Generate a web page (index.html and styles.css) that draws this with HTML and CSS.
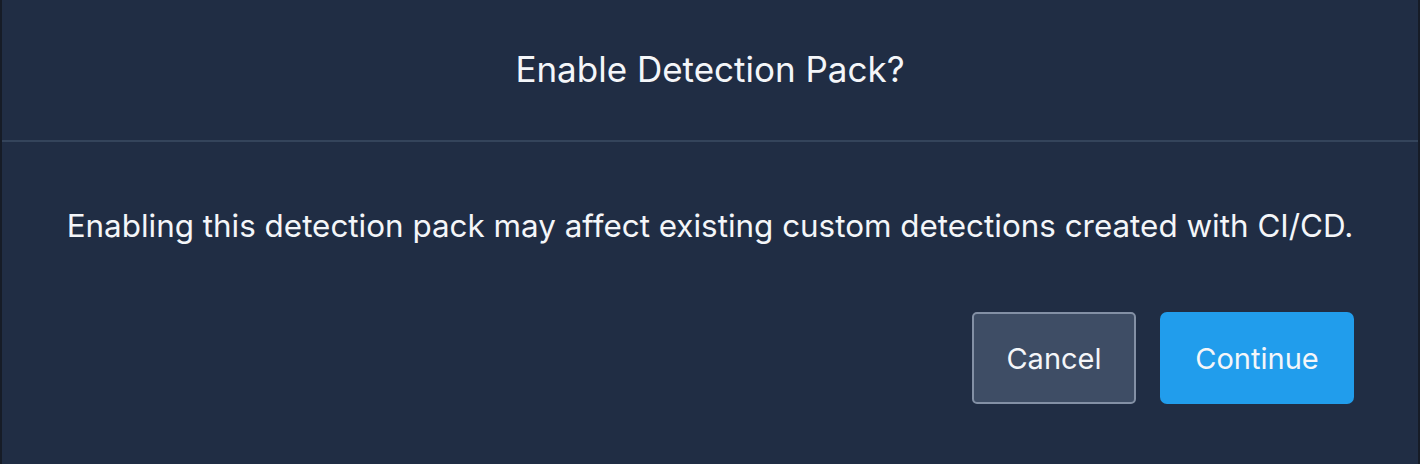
FILE: index.html
```html
<!DOCTYPE html>
<html lang="en">
<head>
<meta charset="utf-8">
<title>Enable Detection Pack?</title>
<link rel="stylesheet" href="styles.css">
</head>
<body>
<div class="backdrop">
  <div class="modal" role="dialog" aria-labelledby="modal-title">
    <header class="modal-header">
      <h2 id="modal-title" class="modal-title">Enable Detection Pack?</h2>
    </header>
    <div class="modal-body">
      <p class="modal-text">Enabling this detection pack may affect existing custom detections created with CI/CD.</p>
    </div>
    <footer class="modal-footer">
      <button class="btn btn-secondary" type="button">Cancel</button>
      <button class="btn btn-primary" type="button">Continue</button>
    </footer>
  </div>
</div>
</body>
</html>
```

FILE: styles.css
```css
html, body {
  margin: 0;
  padding: 0;
  height: 100%;
}

body {
  background: #161c27;
  font-family: Inter, "Noto Sans", sans-serif;
  color: #f4f6f9;
  overflow: hidden;
}

.backdrop {
  display: flex;
  height: 464px;
  padding: 0 2px;
  box-sizing: border-box;
}

.modal {
  flex: 1;
  background: #202d44;
  display: flex;
  flex-direction: column;
}

.modal-header {
  height: 142px;
  display: flex;
  align-items: center;
  justify-content: center;
  border-bottom: 2px solid #34445b;
  box-sizing: border-box;
}

.modal-title {
  margin: 0;
  font-size: 35px;
  font-weight: 400;
  line-height: 44px;
  padding-bottom: 3px;
}

.modal-body {
  display: flex;
  justify-content: center;
  padding-top: 64px;
}

.modal-text {
  margin: 0;
  font-size: 31.4px;
  line-height: 40px;
}

.modal-footer {
  display: flex;
  justify-content: flex-end;
  gap: 24px;
  padding: 66px 64px 0 0;
}

.btn {
  height: 92px;
  font-family: inherit;
  font-size: 29px;
  color: #f4f6f9;
  border-radius: 5px;
  cursor: pointer;
}

.btn-secondary {
  width: 164px;
  background: #3e4d65;
  border: 2px solid #8390a5;
}

.btn-primary {
  width: 194px;
  background: #219dec;
  border: none;
  border-radius: 7px;
}
```
